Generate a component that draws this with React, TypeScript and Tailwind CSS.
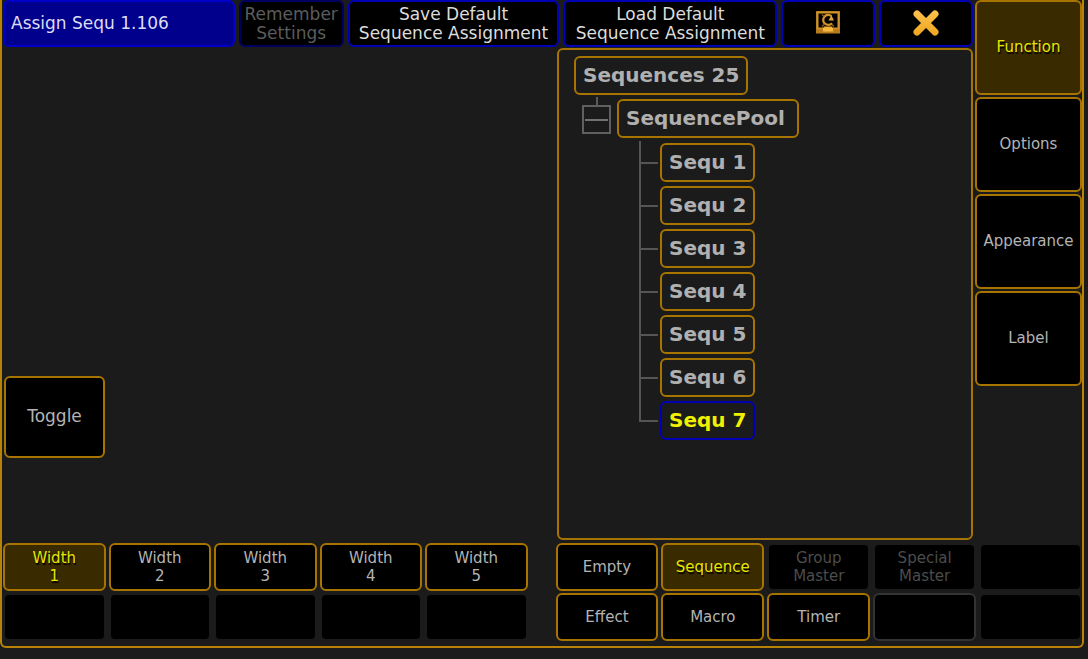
import type { ReactNode } from "react";
import clsx from "clsx";

type Tone = "normal" | "active" | "disabled" | "blank" | "outline";

const tones: Record<Tone, string> = {
  normal: "border-[#a87400] bg-black text-[#b4b4b4]",
  active: "border-[#a87400] bg-[#3a2a00] text-[#e6e600] [text-shadow:1px_2px_1px_#000]",
  disabled: "border-transparent bg-clip-padding bg-black text-[#4c4c4c]",
  blank: "border-transparent bg-clip-padding bg-black",
  outline: "border-[#333333] bg-black",
};

function Key({ tone = "normal", className, lines = [], label }: { tone?: Tone; className?: string; lines?: string[]; label?: string }) {
  return (
    <button
      type="button"
      disabled={tone === "disabled" || tone === "blank"}
      aria-label={label}
      className={clsx(
        "flex min-w-0 flex-col items-center justify-center rounded-md border-2 text-center whitespace-nowrap",
        tones[tone],
        className,
      )}
    >
      {lines.map((l) => (
        <span key={l}>{l}</span>
      ))}
    </button>
  );
}

function HeaderKey({ children, dim, label }: { children: ReactNode; dim?: boolean; label?: string }) {
  return (
    <button
      type="button"
      disabled={dim}
      aria-label={label}
      className={clsx(
        "flex min-w-0 flex-col items-center justify-center rounded-md border-2 bg-black whitespace-nowrap",
        dim ? "border-[#000060] text-[#5c5c5c]" : "border-[#0000b4] text-[#dcdcdc]",
      )}
    >
      {children}
    </button>
  );
}

function ScreenIcon() {
  return (
    <svg className="mb-0.5" width="24" height="23" viewBox="0 0 24 23" fill="none" stroke="#cf9226" aria-hidden="true">
      <rect x="1.3" y="1.3" width="21.4" height="16.400" strokeWidth="2.400" />
      <path d="M15.500 5.200A5 5 0 1 0 16 12.200" strokeWidth="2.300" />
      <path d="M12.500 9.500h5.500l-2.500-5z" fill="#e8a630" stroke="none" />
      <path d="M6 3.500l2 2M6 15.500l2-2M18 15.500l-2-2" strokeWidth="1.500" stroke="#8a6018" />
      <path d="M8 15.500h8l1.500 4h-11z" fill="#f0b038" stroke="none" />
      <path d="M0 18.500h24V22.500H0z" fill="#b87c1c" stroke="none" />
      <path d="M7 17h10v3.500H7z" fill="#f6b83e" stroke="none" />
    </svg>
  );
}

function CloseIcon() {
  return (
    <svg className="mb-0.5" width="26" height="26" viewBox="0 0 26 26" aria-hidden="true">
      <defs>
        <linearGradient id="gold" x1="0" y1="0" x2="0" y2="26" gradientUnits="userSpaceOnUse">
          <stop offset="0" stopColor="#ffc34d" />
          <stop offset="1" stopColor="#eda51f" />
        </linearGradient>
      </defs>
      <path d="M4 4l18 18M22 4L4 22" stroke="url(#gold)" strokeWidth="7" strokeLinecap="round" />
    </svg>
  );
}

const node = "h-[39px] rounded-md border-2 px-[7px] text-left text-[20px] leading-[35px] font-bold whitespace-nowrap";
const sequences = [1, 2, 3, 4, 5, 6, 7];
const tabs = ["Function", "Options", "Appearance", "Label"];

const typeKeys: { id: string; lines: string[]; tone?: Tone }[] = [
  { id: "empty", lines: ["Empty"] },
  { id: "sequence", lines: ["Sequence"], tone: "active" },
  { id: "group", lines: ["Group", "Master"], tone: "disabled" },
  { id: "special", lines: ["Special", "Master"], tone: "disabled" },
  { id: "blank-1", lines: [], tone: "blank" },
  { id: "effect", lines: ["Effect"] },
  { id: "macro", lines: ["Macro"] },
  { id: "timer", lines: ["Timer"] },
  { id: "blank-2", lines: [], tone: "outline" },
  { id: "blank-3", lines: [], tone: "blank" },
];

function SequenceTree() {
  return (
    <div className="rounded-md border-2 border-[#a87400] pt-1.5 pl-[15px]">
      <button type="button" className={clsx(node, "block min-w-[173px] border-[#a87400] text-[#b0b0b0]")}>
        Sequences 25
      </button>
      <div className="mt-0.5 flex gap-1.5 pl-2">
        <div className="flex flex-col items-center">
          <span className="h-2 w-0.5 bg-[#5a5a5a]" />
          <button type="button" aria-label="Collapse" className="flex size-[29px] items-center justify-center border-2 border-[#606060]">
            <span className="h-0.5 w-[23px] bg-[#707070]" />
          </button>
        </div>
        <div className="pt-0.5">
          <button type="button" className={clsx(node, "block min-w-[182px] border-[#a87400] text-[#b0b0b0]")}>
            SequencePool
          </button>
          <ul className="pt-[3px] pl-[22px]">
            {sequences.map((n) => {
              const last = n === sequences.length;
              return (
                <li key={n} className="flex h-[43px] items-center">
                  <span className="mr-0.5 flex w-[19px] flex-col self-stretch">
                    <span className="flex-1 border-b-2 border-l-2 border-[#555555]" />
                    <span className={clsx("flex-1 border-l-2", last ? "border-transparent" : "border-[#555555]")} />
                  </span>
                  <button
                    type="button"
                    className={clsx(node, "min-w-[94px]", last ? "border-[#0000b4] text-[#f0f000]" : "border-[#a87400] text-[#b0b0b0]")}
                  >
                    Sequ {n}
                  </button>
                </li>
              );
            })}
          </ul>
        </div>
      </div>
    </div>
  );
}

export default function App() {
  return (
    <div className="flex min-h-screen flex-col bg-[#1b1b1b] pr-1 pb-[11px] font-['DejaVu_Sans',sans-serif]">
      <div className="flex flex-1 flex-col rounded-b-md border-x-2 border-b-2 border-[#b88206] pb-[5px] pl-px">
        <div className="flex flex-1 gap-0.5">
          <main className="flex min-w-0 flex-1 flex-col">
            <header className="grid h-[47px] grid-cols-[232fr_105fr_212fr_214fr_94fr_94fr] gap-1 text-[17px] leading-[19px]">
              <h1 className="flex items-center rounded-md border-2 border-[#0000c8] bg-[#00008c] pl-1.5 whitespace-nowrap text-[#dcdcf4]">
                Assign Sequ 1.106
              </h1>
              <HeaderKey dim>
                <span>Remember</span>
                <span>Settings</span>
              </HeaderKey>
              <HeaderKey>
                <span>Save Default</span>
                <span>Sequence Assignment</span>
              </HeaderKey>
              <HeaderKey>
                <span>Load Default</span>
                <span>Sequence Assignment</span>
              </HeaderKey>
              <HeaderKey label="Screen">
                <ScreenIcon />
              </HeaderKey>
              <HeaderKey label="Close">
                <CloseIcon />
              </HeaderKey>
            </header>
            <div className="mt-px grid flex-1 grid-cols-[554fr_416fr]">
              <section className="flex min-w-0 flex-col justify-end pb-[82px] pl-px">
                <Key lines={["Toggle"]} className="h-[82px] w-[101px] text-[17px]" />
              </section>
              <SequenceTree />
            </div>
          </main>
          <nav className="flex w-[107px] flex-col gap-0.5 text-[15px]">
            {tabs.map((t) => (
              <Key key={t} lines={[t]} tone={t === "Function" ? "active" : "normal"} className="h-[95px]" />
            ))}
          </nav>
        </div>
        <footer className="mt-[3px] flex gap-7 text-[15px] leading-[18px]">
          <div className="grid min-w-0 flex-[524] auto-rows-[48px] grid-cols-5 gap-x-[3px] gap-y-0.5">
            {[1, 2, 3, 4, 5].map((n) => (
              <Key key={n} lines={["Width", String(n)]} tone={n === 1 ? "active" : "normal"} />
            ))}
            {[1, 2, 3, 4, 5].map((n) => (
              <Key key={n} tone="blank" label={`Unused ${n}`} />
            ))}
          </div>
          <div className="grid min-w-0 flex-[526] auto-rows-[48px] grid-cols-5 gap-x-[3px] gap-y-0.5">
            {typeKeys.map((k) => (
              <Key key={k.id} lines={k.lines} tone={k.tone} label={k.lines.length ? undefined : "Unused"} />
            ))}
          </div>
        </footer>
      </div>
    </div>
  );
}
